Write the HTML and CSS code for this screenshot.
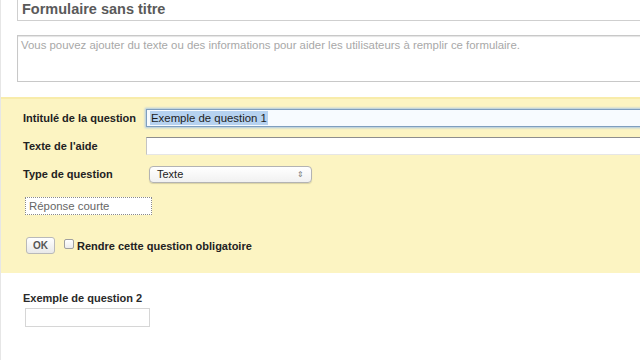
FILE: index.html
```html
<!DOCTYPE html>
<html lang="fr">
<head>
<meta charset="utf-8">
<link rel="stylesheet" href="styles.css">
</head>
<body>
<div class="page">
  <div class="head">
    <div class="title-box">Formulaire sans titre</div>
    <div class="desc-box">Vous pouvez ajouter du texte ou des informations pour aider les utilisateurs à remplir ce formulaire.</div>
  </div>
  <div class="edit">
    <div class="row">
      <div class="label">Intitulé de la question</div>
      <div class="field focus"><span class="sel">Exemple de question 1</span></div>
    </div>
    <div class="row">
      <div class="label">Texte de l'aide</div>
      <div class="field"></div>
    </div>
    <div class="row">
      <div class="label">Type de question</div>
      <div class="select"><span>Texte</span><span class="arrows">&#8661;</span></div>
    </div>
    <div class="preview">Réponse courte</div>
    <div class="actions">
      <div class="btn">OK</div>
      <div class="check"></div>
      <div class="check-label">Rendre cette question obligatoire</div>
    </div>
  </div>
  <div class="next">
    <div class="q-title">Exemple de question 2</div>
    <div class="q-input"></div>
  </div>
</div>
</body>
</html>
```
FILE: styles.css
```css
html, body {
  margin: 0;
  padding: 0;
  background: #ffffff;
  overflow: hidden;
  width: 640px;
  height: 360px;
}
.page {
  font-family: "Liberation Sans", Arial, sans-serif;
  width: 640px;
  height: 360px;
  border-left: 1px solid #e6e6e6;
  box-sizing: border-box;
  overflow: hidden;
}
.head {
  padding: 0 0 15px 16px;
}
.title-box {
  width: 700px;
  height: 20px;
  border: 1px solid #cfcfcf;
  border-top-color: #c4c4c4;
  box-sizing: content-box;
  font-size: 14.5px;
  font-weight: bold;
  color: #5a5a5a;
  padding-left: 4px;
  line-height: 19px;
  margin-top: -1px;
}
.desc-box {
  margin-top: 14px;
  width: 700px;
  height: 47px;
  border: 1px solid #c8c8c8;
  font-size: 11.4px;
  color: #a8a8a8;
  padding: 3px 0 0 3px;
  box-sizing: border-box;
  box-shadow: inset 0 1px 1px #e4e4e4;
  white-space: nowrap;
}
.edit {
  background: #fcf4c2;
  border-top: 2px solid #f8ecaa;
  height: 176px;
  box-sizing: border-box;
  padding: 10px 0 0 22px;
}
.row {
  display: flex;
  align-items: center;
  height: 18px;
  margin-bottom: 10px;
}
.label {
  flex: none;
  width: 123px;
  white-space: nowrap;
  font-size: 11px;
  font-weight: bold;
  color: #222;
}
.field {
  flex: none;
  width: 520px;
  height: 18px;
  background: #fff;
  box-sizing: border-box;
  border: 1px solid #c4c4c4;
  border-top-color: #8d8d8d;
  border-bottom-color: #e6e6e6;
}
.field.focus {
  border: 1px solid #7f9fbf;
  box-shadow: 0 0 2px 1px #a9c6e6;
  background: #f7fbff;
  display: flex;
  align-items: center;
  padding-left: 3px;
}
.sel {
  background: #b6d2f0;
  font-size: 11.4px;
  color: #1d1d1d;
  line-height: 14px;
  padding: 0 1px;
}
.select {
  flex: none;
  margin-left: 3px;
  width: 163px;
  height: 17px;
  box-sizing: border-box;
  border: 1px solid #b3b3b3;
  border-radius: 4px;
  background: linear-gradient(#ffffff, #f1f1f1);
  box-shadow: 0 1px 1px #d9d2a6;
  display: flex;
  align-items: center;
  justify-content: space-between;
  padding: 0 7px 0 7px;
  font-size: 11px;
  color: #222;
}
.arrows {
  font-size: 8px;
  color: #777;
}
.preview {
  margin: 14px 0 0 2px;
  width: 127px;
  height: 18px;
  box-sizing: border-box;
  border: 1px dotted #8a8a8a;
  background: #ffffff;
  font-size: 11.4px;
  color: #666;
  padding-left: 3px;
  line-height: 16px;
  white-space: nowrap;
}
.actions {
  margin-top: 22px;
  display: flex;
  align-items: center;
  height: 17px;
}
.btn {
  margin-left: 3px;
  width: 29px;
  height: 17px;
  box-sizing: border-box;
  border: 1px solid #b9b9b9;
  border-radius: 3px;
  background: linear-gradient(#ffffff, #e9e9e9);
  font-size: 10px;
  font-weight: bold;
  color: #555;
  text-align: center;
  line-height: 15px;
}
.check {
  margin: -4px 0 0 9px;
  width: 10px;
  height: 10px;
  box-sizing: border-box;
  border: 1px solid #a0a0a0;
  border-radius: 2px;
  background: linear-gradient(#ffffff, #ececec);
}
.check-label {
  margin-left: 3px;
  font-size: 11px;
  font-weight: bold;
  color: #222;
  white-space: nowrap;
}
.next {
  padding: 19px 0 0 22px;
}
.q-title {
  font-size: 11px;
  font-weight: bold;
  color: #2a2a2a;
  line-height: 13px;
}
.q-input {
  margin: 3px 0 0 2px;
  width: 125px;
  height: 19px;
  box-sizing: border-box;
  border: 1px solid #d6d6d6;
  background: #fff;
}
```
